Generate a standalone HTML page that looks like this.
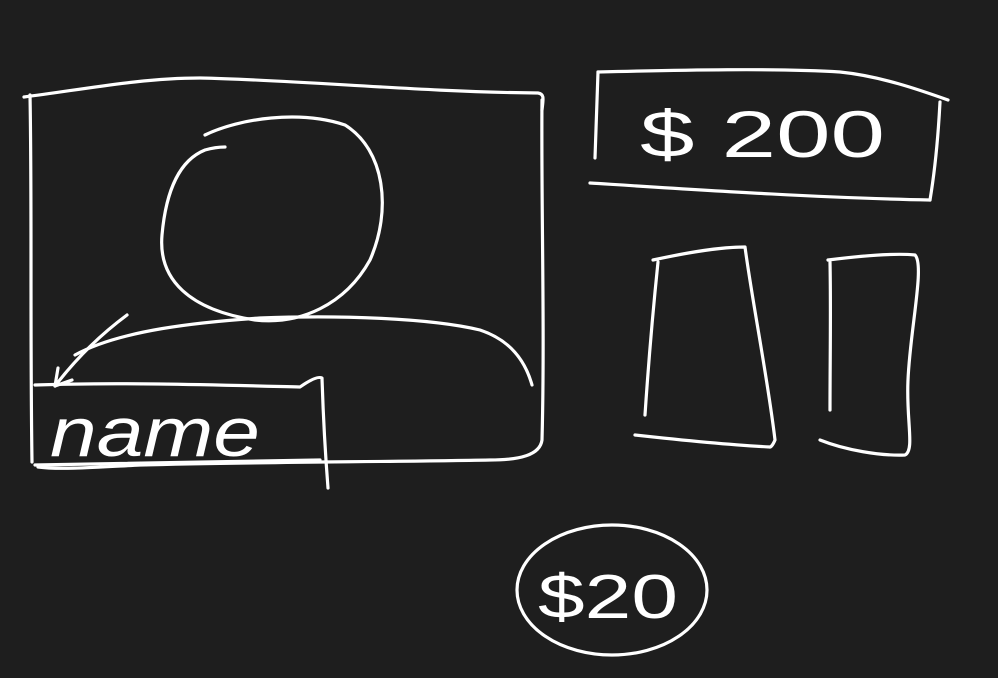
<!DOCTYPE html>
<html><head><meta charset="utf-8"><style>
html,body{margin:0;padding:0;background:#1e1e1e;}
svg{display:block}
</style></head><body>
<svg width="998" height="678" viewBox="0 0 998 678" xmlns="http://www.w3.org/2000/svg">
<rect width="998" height="678" fill="#1e1e1e"/>
<g fill="none" stroke="#fff" stroke-width="3.2" stroke-linecap="round" stroke-linejoin="round">
<path d="M24 97 C80 90 140 78 200 78 C300 80 420 92 538 93 C545 94 543 100 542 110"/>
<path d="M542 100 C541 200 545 330 542 440 C540 455 520 460 490 460 C380 462 250 462 140 465 C100 467 60 470 38 467"/>
<path d="M30 95 C32 200 30 330 32 462"/>
<path d="M205 135 C240 118 300 110 345 125 C385 150 392 210 370 260 C345 305 300 325 255 320 C190 310 158 280 162 235 C166 190 180 160 205 150 C212 148 220 147 225 147"/>
<path d="M75 355 C120 330 200 322 260 318 C340 315 430 318 480 330 C510 340 525 360 532 385"/>
<path d="M127 315 C100 335 75 360 55 386"/>
<path d="M55 386 L58 368 M55 386 L72 380"/>
<path d="M35 385 C120 382 220 385 300 387 C310 380 318 376 322 378 C323 410 325 450 328 488"/>
<path d="M35 465 L320 460"/>
<path d="M598 72 C680 70 780 68 840 72 C880 76 920 90 948 100"/>
<path d="M940 102 C938 140 935 170 930 200"/>
<path d="M590 183 C700 190 820 198 930 200"/>
<path d="M598 72 C597 100 596 130 595 158"/>
<path d="M653 260 C690 252 720 247 745 247 C752 300 768 380 775 440 C772 447 770 447 770 447"/>
<path d="M635 435 C680 440 730 445 770 447"/>
<path d="M658 262 C652 320 648 370 645 415"/>
<path d="M828 260 C860 256 895 253 915 255 C925 265 910 330 908 380 C906 420 915 450 905 455 C880 456 845 450 820 440"/>
<path d="M830 262 C831 310 830 360 830 410"/>
<ellipse cx="612" cy="590" rx="95" ry="65"/>
</g>
<g font-family="'Liberation Sans', sans-serif" fill="#fff">
<text x="50" y="456" font-size="70" font-style="italic" textLength="210" lengthAdjust="spacingAndGlyphs">name</text>
<text x="640" y="157" font-size="66" textLength="245" lengthAdjust="spacingAndGlyphs">$ 200</text>
<text x="538" y="618" font-size="62" textLength="140" lengthAdjust="spacingAndGlyphs">$20</text>
</g>
</svg>
</body></html>
